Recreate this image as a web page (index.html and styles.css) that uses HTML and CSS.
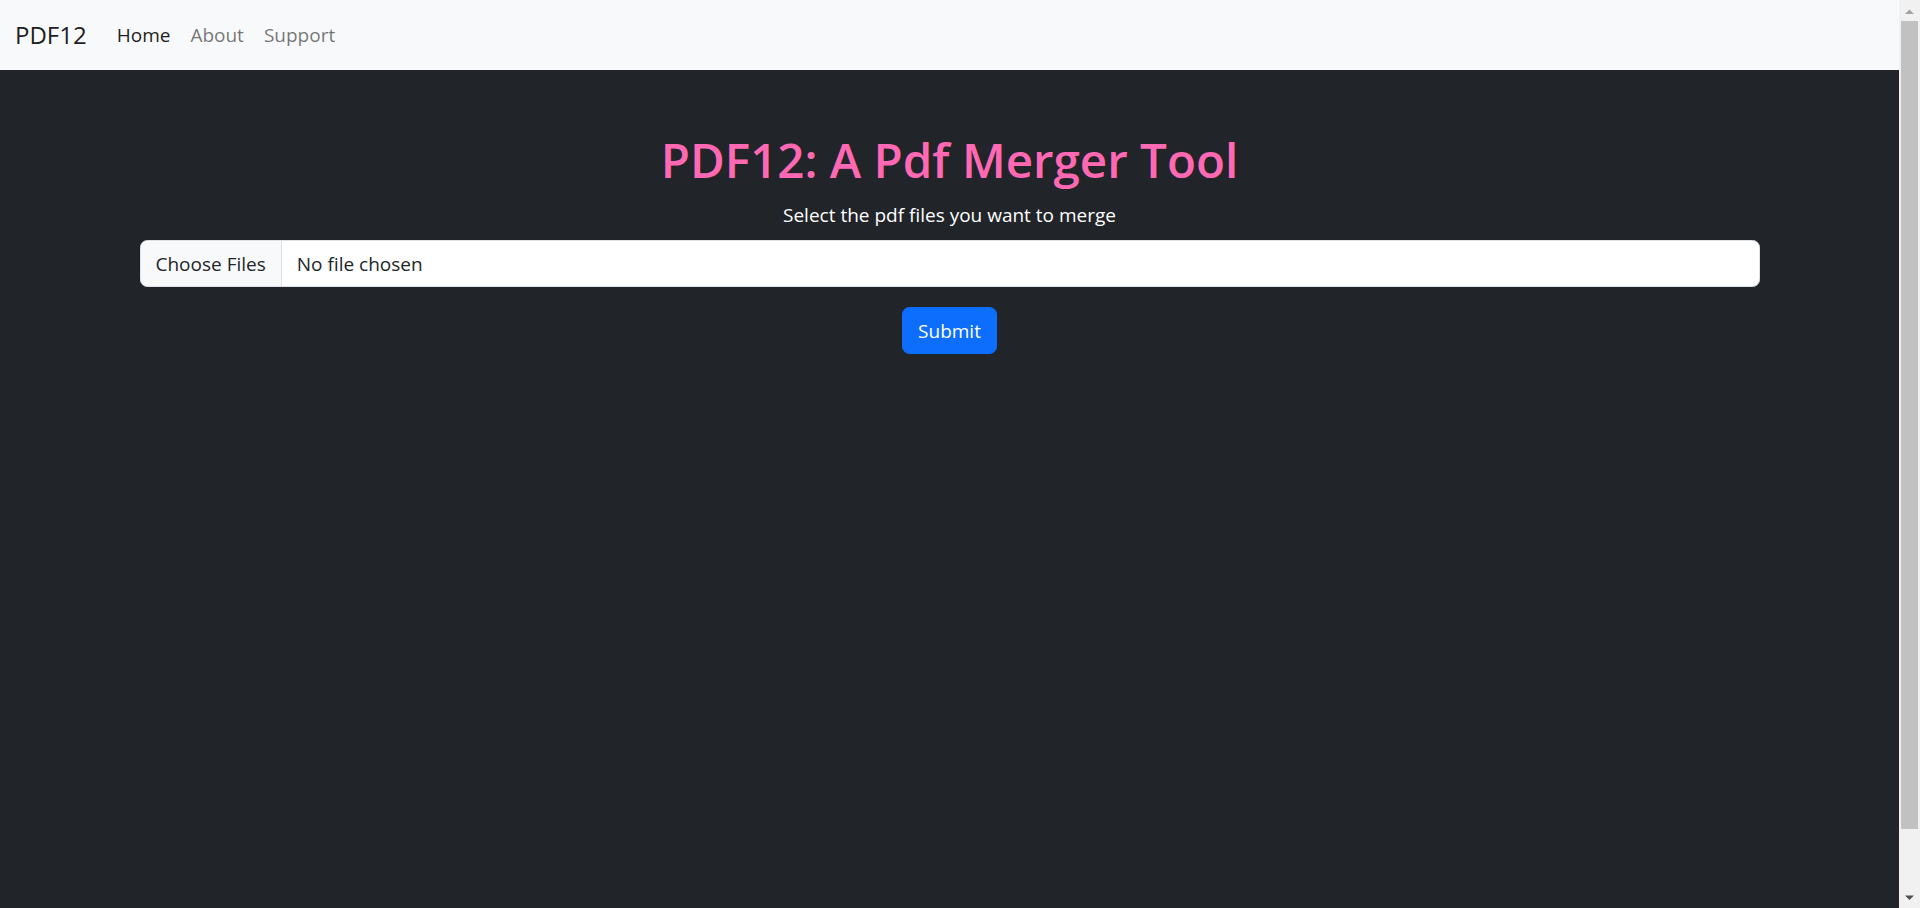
FILE: index.html
```html
<!DOCTYPE html>
<html lang="en">
<head>
<meta charset="utf-8">
<title>PDF12</title>
<link rel="stylesheet" href="styles.css">
</head>
<body>
<div class="page">
  <nav class="navbar">
    <a class="brand" href="#">PDF12</a>
    <ul class="nav">
      <li><a class="nav-link active" href="#">Home</a></li>
      <li><a class="nav-link" href="#">About</a></li>
      <li><a class="nav-link" href="#">Support</a></li>
    </ul>
  </nav>
  <main class="hero">
    <div class="container">
      <h1 class="title">PDF12: A Pdf Merger Tool</h1>
      <label class="form-label">Select the pdf files you want to merge</label>
      <div class="file-input">
        <span class="file-btn">Choose Files</span>
        <span class="file-name">No file chosen</span>
      </div>
      <button class="btn-submit" type="button">Submit</button>
    </div>
  </main>
</div>
<div class="scrollbar" aria-hidden="true">
  <div class="sb-btn">
    <svg width="21" height="21" viewBox="0 0 21 21"><polygon points="6,14 15,14 10.5,9.5" fill="#a3a3a3"/></svg>
  </div>
  <div class="sb-track">
    <div class="sb-thumb"></div>
  </div>
  <div class="sb-btn">
    <svg width="21" height="21" viewBox="0 0 21 21"><polygon points="6,8.5 15,8.5 10.5,13" fill="#505050"/></svg>
  </div>
</div>
</body>
</html>
```

FILE: styles.css
```css
html, body {
  margin: 0;
  padding: 0;
  height: 100%;
}
body {
  display: flex;
  overflow: hidden;
  background: #212529;
  font-family: "Open Sans", "Noto Sans", sans-serif;
  color: #212529;
}
.page {
  flex: 1;
  min-width: 0;
  display: flex;
  flex-direction: column;
}

/* fake classic scrollbar */
.scrollbar {
  width: 21px;
  flex-shrink: 0;
  display: flex;
  flex-direction: column;
  background: #f1f1f1;
}
.sb-btn {
  height: 21px;
  flex-shrink: 0;
}
.sb-btn svg {
  display: block;
}
.sb-track {
  flex: 1;
  padding: 0 2px 58px;
  display: flex;
}
.sb-thumb {
  flex: 1;
  background: #c1c1c1;
}

.navbar {
  display: flex;
  align-items: center;
  background: #f8f9fa;
  padding: 10px 15px;
  height: 50px;
  flex-shrink: 0;
}
.brand {
  font-size: 24px;
  line-height: 37.5px;
  padding: 6px 0;
  margin-right: 20px;
  color: rgba(0, 0, 0, 0.9);
  text-decoration: none;
}
.nav {
  display: flex;
  list-style: none;
  margin: 0;
  padding: 0;
}
.nav-link {
  display: block;
  font-size: 19px;
  line-height: 30px;
  padding: 10px 10px;
  color: rgba(0, 0, 0, 0.55);
  text-decoration: none;
}
.nav-link.active {
  color: rgba(0, 0, 0, 0.9);
}

.hero {
  flex: 1;
}
.container {
  max-width: 1620px;
  margin: 0 auto;
  padding: 60px 15px 0;
  text-align: center;
}
.title {
  margin: 0 0 10px;
  font-size: 47.5px;
  line-height: 60px;
  font-weight: 600;
  color: #ff69b4;
}
.form-label {
  display: block;
  margin-bottom: 10px;
  font-size: 19px;
  line-height: 30px;
  color: #ffffff;
}
.file-input {
  display: flex;
  align-items: stretch;
  text-align: left;
  background: #ffffff;
  border: 1.25px solid #dee2e6;
  border-radius: 7.5px;
  overflow: hidden;
  font-size: 19px;
  line-height: 30px;
  color: #212529;
}
.file-btn {
  padding: 7.5px 15px;
  background: #f8f9fa;
  border-right: 1.25px solid #dee2e6;
}
.file-name {
  padding: 7.5px 15px;
}
.btn-submit {
  margin-top: 20px;
  font-family: inherit;
  font-size: 19px;
  line-height: 30px;
  padding: 7.5px 15px;
  color: #ffffff;
  background: #0d6efd;
  border: 1.25px solid #0d6efd;
  border-radius: 7.5px;
  cursor: pointer;
}
```
